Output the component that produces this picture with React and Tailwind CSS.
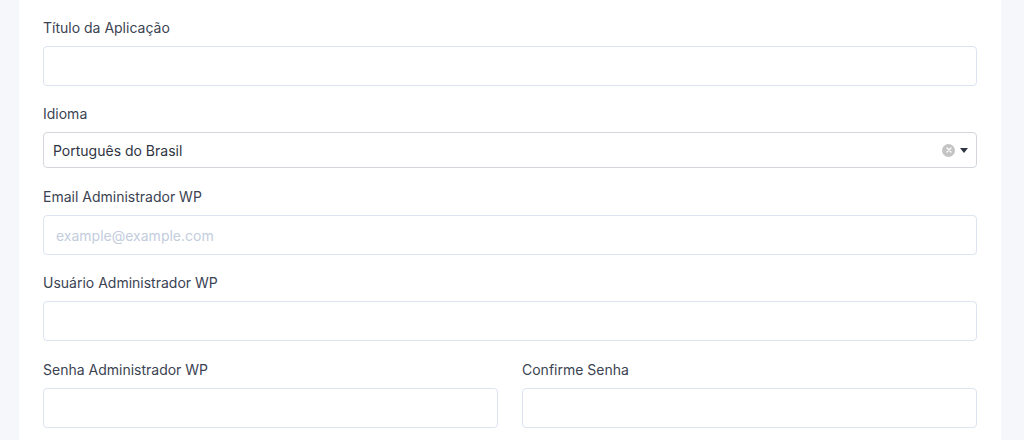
import React from 'react';

const font = { fontFamily: 'Inter, "Noto Sans", sans-serif' };

function Field({ label, children, className = '' }) {
  return (
    <div className={`flex flex-col ${className}`}>
      <label className="text-[14px] leading-5 text-[#3b4352] mb-2">{label}</label>
      {children}
    </div>
  );
}

function TextInput({ placeholder, type = 'text' }) {
  return (
    <input
      type={type}
      placeholder={placeholder}
      className="h-10 w-full rounded-[4px] border border-[#dce4f1] bg-white px-3 text-[14px] text-[#2f3542] placeholder:text-[#c3cddd] outline-none"
    />
  );
}

export default function App() {
  return (
    <div className="h-[440px] w-[1024px] bg-[#f6f7fa] overflow-hidden" style={font}>
      <div className="ml-[19px] h-full w-[982px] bg-white px-6 pt-[18px]">
        <Field label="Título da Aplicação" className="mb-[18px]">
          <TextInput />
        </Field>

        <Field label="Idioma" className="mb-[19px]">
          <div className="flex h-9 w-full items-center rounded-[4px] border border-[#d3d7dc] bg-white pl-[9px] pr-2">
            <span className="flex-1 text-[14px] text-[#2f3542]">Português do Brasil</span>
            <span className="flex h-[13px] w-[13px] items-center justify-center rounded-full bg-[#c4c4c4]">
              <svg width="6" height="6" viewBox="0 0 6 6">
                <path d="M1 1L5 5M5 1L1 5" stroke="#fff" strokeWidth="1.3" strokeLinecap="round" />
              </svg>
            </span>
            <svg className="ml-[5px]" width="8" height="5" viewBox="0 0 8 5">
              <path d="M0 0H8L4 5Z" fill="#2f3542" />
            </svg>
          </div>
        </Field>

        <Field label="Email Administrador WP" className="mb-[18px]">
          <TextInput type="email" placeholder="example@example.com" />
        </Field>

        <Field label="Usuário Administrador WP" className="mb-[19px]">
          <TextInput />
        </Field>

        <div className="grid grid-cols-2 gap-6">
          <Field label="Senha Administrador WP">
            <TextInput type="password" />
          </Field>
          <Field label="Confirme Senha">
            <TextInput type="password" />
          </Field>
        </div>
      </div>
    </div>
  );
}
